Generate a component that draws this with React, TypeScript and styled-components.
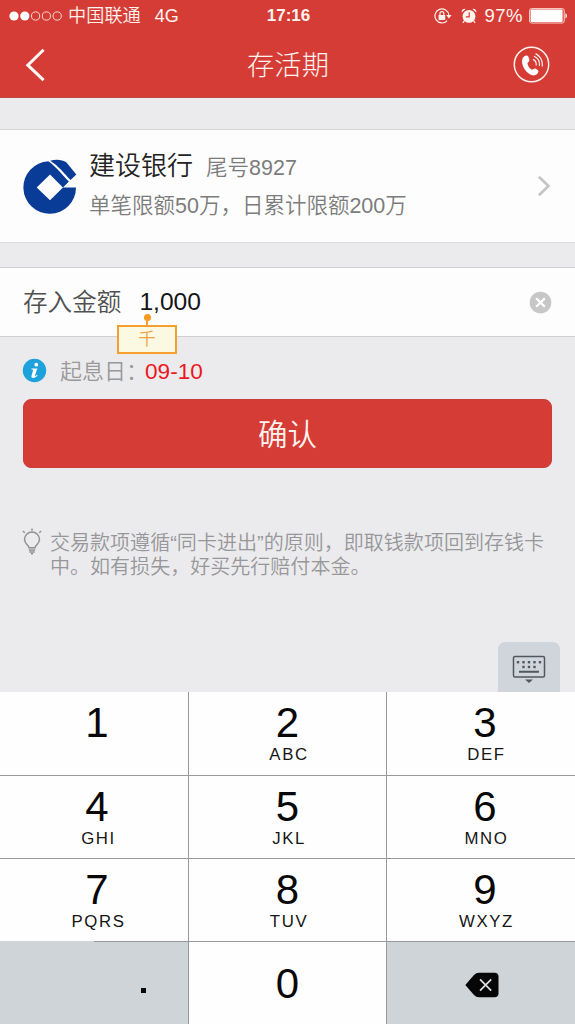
import React from "react";
import styled, { createGlobalStyle } from "styled-components";

const GlobalStyle = createGlobalStyle`
  * { box-sizing: border-box; }
  body {
    margin: 0;
    background: #ebebee;
    font-family: "Liberation Sans", "Noto Sans CJK SC", sans-serif;
    font-weight: 350;
  }
  svg { display: block; flex: none; }
`;

const Screen = styled.main`
  width: 575px;
  height: 1024px;
  display: flex;
  flex-direction: column;
  overflow: hidden;
  background: #ebebee;
`;

const Header = styled.header`
  height: 98px;
  flex: none;
  background: #d63c36;
  color: #fff3ee;
  border-bottom: 1px solid #bd4a46;
`;

const StatusBar = styled.div`
  height: 32px;
  display: grid;
  grid-template-columns: 1fr auto 1fr;
  align-items: center;
  padding: 0 7px 0 9px;
  font-size: 18px;
  line-height: 32px;
`;

const StatusGroup = styled.div<{ $end?: boolean }>`
  display: flex;
  align-items: center;
  justify-content: ${(p) => (p.$end ? "flex-end" : "flex-start")};
`;

const Carrier = styled.span`
  margin-left: 6px;
  padding-top: 1px;
  font-size: 18.2px;
  line-height: 31px;
`;

const Network = styled.span`
  margin-left: 14px;
`;

const Clock = styled.span`
  font-size: 17px;
  font-weight: 700;
`;

const BatteryLevel = styled.span`
  margin: 0 6px 0 7px;
  font-size: 18.5px;
  letter-spacing: 0.5px;
`;

const NavBar = styled.div`
  height: 65px;
  display: flex;
  align-items: center;
  justify-content: space-between;
  padding: 0 25px;
`;

const Title = styled.h1`
  margin: 2px 0 0 18px;
  font-size: 27.3px;
  font-weight: 300;
  line-height: 62px;
`;

const BankCard = styled.section`
  height: 114px;
  flex: none;
  margin-top: 31px;
  padding: 0 24px 0 22px;
  display: flex;
  align-items: center;
  background: #fdfdfd;
  border-top: 1px solid #d6d6d9;
  border-bottom: 1px solid #dcdcde;
`;

const BankDetails = styled.div`
  flex: 1;
  margin-left: 12px;
  padding-bottom: 1px;
  color: #7c7c7c;
  font-size: 21.5px;
  line-height: 38px;
`;

const BankHeading = styled.div`
  display: flex;
  align-items: baseline;
  gap: 13px;
`;

const BankName = styled.span`
  font-size: 26px;
  color: #222;
`;

const AmountRow = styled.section`
  position: relative;
  height: 70px;
  flex: none;
  margin-top: 24px;
  padding: 0 23px;
  display: flex;
  align-items: center;
  background: #fdfdfd;
  border-top: 1px solid #cfd0d6;
  border-bottom: 1px solid #cfd0d6;
  line-height: 68px;
`;

const AmountLabel = styled.span`
  padding-top: 1px;
  font-size: 24.6px;
  line-height: 67px;
  color: #505050;
`;

const AmountValue = styled.span`
  flex: 1;
  margin-left: 18px;
  font-size: 24.6px;
  color: #151515;
`;

const UnitTip = styled.div`
  position: absolute;
  left: 117px;
  top: 57px;
  width: 60px;
  height: 29px;
  border: 2px solid #f5a02e;
  background: #fcf9e3;
  color: #eda443;
  font-size: 17.5px;
  line-height: 25px;
  text-align: center;

  &::before {
    content: "";
    position: absolute;
    left: 24.5px;
    top: -13.5px;
    width: 7px;
    height: 7px;
    border-radius: 50%;
    background: #f59a1e;
  }

  &::after {
    content: "";
    position: absolute;
    left: 27px;
    top: -9px;
    width: 2px;
    height: 8px;
    background: #f5a02e;
  }
`;

const InterestRow = styled.div`
  height: 62px;
  flex: none;
  padding: 4px 22px 0;
  display: flex;
  align-items: center;
  color: #999;
  font-size: 22px;
  line-height: 30px;
`;

const InterestLabel = styled.span`
  width: 85px;
  margin-left: 13px;
  padding-top: 3px;
  white-space: nowrap;
`;

const InterestDate = styled.span`
  padding-top: 3px;
  color: #ee1620;
  font-size: 22.6px;
`;

const ConfirmButton = styled.button`
  height: 69px;
  flex: none;
  margin: 0 23px;
  padding: 0 0 4px;
  border: 1px solid #c93d38;
  border-radius: 8px;
  background: #d63c36;
  color: #fff3ee;
  font: inherit;
  font-size: 29.5px;
`;

const Note = styled.div`
  display: flex;
  padding: 0 22px;
  margin-top: 60px;
  color: #979799;
`;

const NoteText = styled.p`
  margin: 3px 0 0 8px;
  font-size: 20.05px;
  line-height: 24px;
  white-space: nowrap;
`;

const KeyboardToggle = styled.button`
  width: 62px;
  height: 50px;
  flex: none;
  margin: auto 15px 0 auto;
  padding: 12px 0 0;
  display: flex;
  justify-content: center;
  border: 0;
  border-radius: 7px 7px 0 0;
  background: #d0d5db;
`;

const Keypad = styled.div`
  height: 332px;
  flex: none;
  display: grid;
  grid-template-columns: 188px 197px 188px;
  grid-template-rows: 83px 82px 82px 82px;
  gap: 1px;
  background: #97999c;
`;

const Key = styled.button<{ $shift?: number }>`
  display: flex;
  flex-direction: column;
  align-items: center;
  padding: 7px 0 0 ${(p) => p.$shift ?? 0}px;
  border: 0;
  background: #fefefe;
  color: #080808;
  font: inherit;
`;

const ZeroKey = styled(Key)`
  padding-top: 18px;
`;

const PointKey = styled(Key)`
  margin-top: -1px;
  padding: 47px 0 0 98px;
  background: linear-gradient(#97999c, #97999c) 94px 0 / 94px 1px no-repeat #cfd4d9;
`;

const DeleteKey = styled(Key)`
  justify-content: center;
  padding: 4px 0 0 2px;
  background: #cfd4d9;
`;

const Digit = styled.span`
  font-size: 42px;
  line-height: 47px;
  font-weight: 400;
`;

const Letters = styled.span`
  margin-left: 3px;
  font-size: 16.8px;
  line-height: 18px;
  letter-spacing: 1.6px;
  color: #151515;
`;

const Point = styled.i`
  width: 5px;
  height: 5px;
  background: #080808;
`;

const SignalDots = () => (
  <svg width="53" height="12" viewBox="0 0 53 12" fill="none" stroke="#fbd9d0">
    {[0, 1, 2, 3, 4].map((i) => (
      <circle
        key={i}
        cx={5 + i * 10.8}
        cy="6"
        r={i < 2 ? 4.6 : 4.1}
        fill={i < 2 ? "#fff" : "none"}
        strokeWidth={i < 2 ? 0 : 1}
      />
    ))}
  </svg>
);

const RotationLock = () => (
  <svg width="18" height="16" viewBox="0 0 18 16" fill="none" stroke="#fff3ee" strokeWidth="1.2">
    <path d="M13.2 12.6A7 7 0 1 1 14.9 7.2" />
    <path d="M12.2 7h5.4l-2.7 3.6z" fill="#fff3ee" stroke="none" />
    <rect x="4.6" y="7" width="6.6" height="5" fill="#fff3ee" stroke="none" />
    <path d="M6 7.2V5.6a1.9 1.9 0 0 1 3.8 0v1.6" />
  </svg>
);

const AlarmIcon = () => (
  <svg width="16" height="16" viewBox="0 0 16 16" fill="#fff3ee">
    <circle cx="8" cy="8.4" r="6.4" />
    <path d="M.7 4.4A3 3 0 0 1 4.6.9zM15.3 4.4A3 3 0 0 0 11.4.9z" />
    <path d="M3.5 12.5l-1.6 2.3M12.5 12.5l1.6 2.3" stroke="#fff3ee" strokeWidth="1.3" />
    <path d="M8.2 4.3v4.5H4.8" fill="none" stroke="#d63c36" strokeWidth="1.2" />
  </svg>
);

const BatteryIcon = () => (
  <svg width="39" height="16" viewBox="0 0 39 16">
    <rect x=".6" y=".6" width="34.6" height="14.4" rx="2" fill="none" stroke="#fbd9d0" />
    <rect x="1.6" y="1.600" width="32" height="12.400" rx="1" fill="#fff" />
    <path d="M36.4 5.2c2 .8 2 4.4 0 5.2z" fill="#fff3ee" />
  </svg>
);

const BackIcon = () => (
  <svg width="20" height="34" viewBox="0 0 20 34" fill="none" stroke="#fff8f4" strokeWidth="3">
    <path d="M18.6 1.8L2.8 17.2l15.8 15" />
  </svg>
);

const PhoneIcon = () => (
  <svg width="37" height="37" viewBox="0 0 37 37" fill="none" stroke="#fff3ee">
    <circle cx="18.5" cy="18.5" r="17.2" strokeWidth="1.5" />
    <path
      d="M9.300 13.200C10 11 11.800 9.600 14 9.600c1.200 0 2 2.300 2.400 4.700.2 1.400-2 1.900-1.900 3.300.3 2.500 2 5 4 6 1.400.6 2.600-1.500 3.900-1 1.700.8 3.300 2 3 3.200-.7 2.600-3.300 4-5.900 3.500C13.300 28 7.700 19 9.300 13.200z"
      fill="#fff"
      stroke="none"
    />
    <path d="M20 13.400c2 .9 3.500 3.300 3.200 6.100M21 10.200c3.300 1.300 5.800 4.900 5.400 9.700M22.600 7.600c4.300 2 7.500 6.900 6.700 12.900" strokeWidth="1.200" />
  </svg>
);

const BankLogo = () => (
  <svg width="55" height="55" viewBox="0 0 55 55" fill="#083c96">
    <path
      fillRule="evenodd"
      d="M26.300 2.200A26.300 26.300 0 1 0 54 28.500H41L46.900 22.600C40 15.500 34 7.500 26.300 2.200zM28 15.500L14.700 28.500 28 41.200 41 28.500z"
    />
    <path d="M28.200 1.700C33 .2 40 0 44.500 3.500L54.300 15.600 48.500 21.100C42 14 36 6.500 28.200 1.700z" />
  </svg>
);

const ChevronIcon = () => (
  <svg width="14" height="22" viewBox="0 0 14 22" fill="none" stroke="#c4c4c4" strokeWidth="2.600">
    <path d="M1.800 1.800L11.500 11l-9.700 9.200" />
  </svg>
);

const ClearIcon = () => (
  <svg width="23" height="23" viewBox="0 0 23 23">
    <circle cx="11.500" cy="11.500" r="10.800" fill="#c7c7c7" />
    <path d="M7.200 7.200l8.600 8.600M15.800 7.200l-8.600 8.600" stroke="#fff" strokeWidth="2.300" />
  </svg>
);

const InfoIcon = () => (
  <svg width="25" height="25" viewBox="0 0 25 25">
    <circle cx="12.500" cy="12.500" r="11.700" fill="#1da2dc" />
    <circle cx="14.300" cy="6.700" r="1.900" fill="#fff" />
    <path d="M9.500 10.400h5.800l-2.300 7.200c-.3 1 .8.500 2-.8l.6.600c-2.300 3.100-7 3.400-6.100.3l1.500-5.300c.2-.8-.4-.9-1.500-.9z" fill="#fff" />
  </svg>
);

const BulbIcon = () => (
  <svg width="20" height="28" viewBox="0 0 20 28" fill="none" stroke="#919193" strokeWidth="1.500">
    <path d="M7 19.800c0-2.200-4.500-4-4.500-8.300a7.500 7.500 0 0 1 15 0c0 4.300-4.500 6.100-4.500 8.300zM6.800 21.900h6.400M7.300 23.900h5.400M9 25.700h2" />
    <path d="M10 .5v2.200M.8 3l2 1.700M19.200 3l-2 1.700" />
  </svg>
);

const KeyboardIcon = () => (
  <svg width="34" height="30" viewBox="0 0 34 30" fill="#4e5862">
    <rect x="1.500" y="2.500" width="31" height="20.500" rx="1.500" fill="none" stroke="#4e5862" strokeWidth="1.500" />
    {[6, 11.5, 17, 22.5, 28].map((x) => (
      <rect key={x} x={x - 1.2} y="7" width="2.400" height="2.400" />
    ))}
    {[11.5, 17, 22.5].map((x) => (
      <rect key={x} x={x - 1.2} y="11.800" width="2.400" height="2.400" />
    ))}
    <path d="M7 16.700h20v2H7zM13 25.500h8l-4 3.600z" />
  </svg>
);

const BackspaceIcon = () => (
  <svg width="34" height="26" viewBox="0 0 34 26">
    <path d="M.3 13L9 3Q11 .8 14 .8h15.500q4 0 4 4v16.400q0 4-4 4H14q-3 0-5-2.200z" fill="#060606" />
    <path d="M15 7.300l11.200 11.400M26.200 7.300L15 18.700" stroke="#dde1e5" strokeWidth="1.700" />
  </svg>
);

const KEYS = [
  { digit: "1", letters: "", shift: 6 },
  { digit: "2", letters: "ABC", shift: 0 },
  { digit: "3", letters: "DEF", shift: 8 },
  { digit: "4", letters: "GHI", shift: 6 },
  { digit: "5", letters: "JKL", shift: 0 },
  { digit: "6", letters: "MNO", shift: 8 },
  { digit: "7", letters: "PQRS", shift: 6 },
  { digit: "8", letters: "TUV", shift: 0 },
  { digit: "9", letters: "WXYZ", shift: 8 },
];

export default function App() {
  return (
    <>
      <GlobalStyle />
      <Screen>
        <Header>
          <StatusBar>
            <StatusGroup>
              <SignalDots />
              <Carrier>中国联通</Carrier>
              <Network>4G</Network>
            </StatusGroup>
            <Clock>17:16</Clock>
            <StatusGroup $end>
              <RotationLock />
              <svg width="9" height="1" />
              <AlarmIcon />
              <BatteryLevel>97%</BatteryLevel>
              <BatteryIcon />
            </StatusGroup>
          </StatusBar>
          <NavBar>
            <BackIcon />
            <Title>存活期</Title>
            <PhoneIcon />
          </NavBar>
        </Header>
        <BankCard>
          <BankLogo />
          <BankDetails>
            <BankHeading>
              <BankName>建设银行</BankName>
              <span>尾号8927</span>
            </BankHeading>
            <div>单笔限额50万，日累计限额200万</div>
          </BankDetails>
          <ChevronIcon />
        </BankCard>
        <AmountRow>
          <AmountLabel>存入金额</AmountLabel>
          <AmountValue>1,000</AmountValue>
          <ClearIcon />
          <UnitTip>千</UnitTip>
        </AmountRow>
        <InterestRow>
          <InfoIcon />
          <InterestLabel>起息日：</InterestLabel>
          <InterestDate>09-10</InterestDate>
        </InterestRow>
        <ConfirmButton>确认</ConfirmButton>
        <Note>
          <BulbIcon />
          <NoteText>
            交易款项遵循“同卡进出”的原则，即取钱款项回到存钱卡
            <br />
            中。如有损失，好买先行赔付本金。
          </NoteText>
        </Note>
        <KeyboardToggle aria-label="收起键盘">
          <KeyboardIcon />
        </KeyboardToggle>
        <Keypad>
          {KEYS.map((k) => (
            <Key key={k.digit} $shift={k.shift}>
              <Digit>{k.digit}</Digit>
              {k.letters && <Letters>{k.letters}</Letters>}
            </Key>
          ))}
          <PointKey aria-label=".">
            <Point />
          </PointKey>
          <ZeroKey>
            <Digit>0</Digit>
          </ZeroKey>
          <DeleteKey aria-label="删除">
            <BackspaceIcon />
          </DeleteKey>
        </Keypad>
      </Screen>
    </>
  );
}
